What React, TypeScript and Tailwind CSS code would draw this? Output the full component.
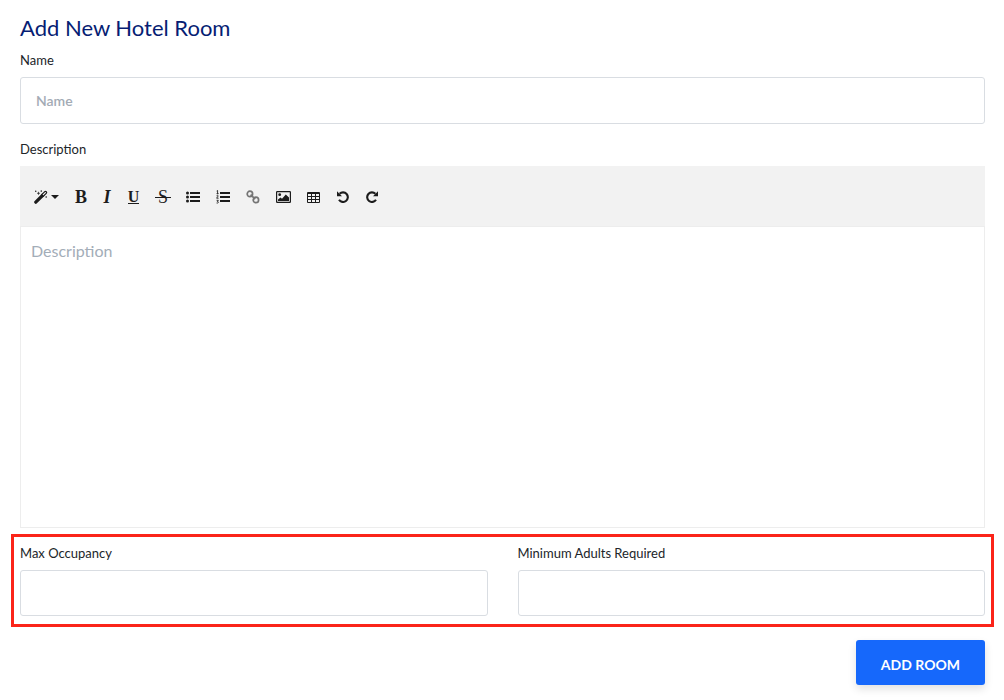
import { useState } from "react";
import type { ReactNode } from "react";

type ToolProps = {
  label: string;
  width: string;
  disabled?: boolean;
  children: ReactNode;
};

function Tool({ label, width, disabled, children }: ToolProps) {
  return (
    <button
      type="button"
      aria-label={label}
      title={label}
      disabled={disabled}
      className={`flex h-6 items-center justify-center text-[#1c1c1c] disabled:text-[#757575] ${width}`}
    >
      {children}
    </button>
  );
}

function WandIcon() {
  return (
    <svg viewBox="0 0 14 14" className="h-[14px] w-[14px] shrink-0" aria-hidden="true">
      <path d="M1.8 12.2 9 5" stroke="currentColor" strokeWidth="3.2" strokeLinecap="round" />
      <path d="m8.6 5.4 2.9-2.9" stroke="currentColor" strokeWidth="3.4" strokeLinecap="round" />
      <path d="m9.3 4.7 2.1-2.1" stroke="#f2f2f2" strokeWidth="1.2" strokeLinecap="round" />
      <path
        d="M4.5 1.8v3M3 3.3h3M7.3.4v1.4M6.6 1.1H8M1.7.6V2M1 1.3h1.4M12.2 6.3v1.4M11.5 7h1.4"
        stroke="currentColor"
        strokeWidth=".7"
      />
    </svg>
  );
}

function CaretIcon() {
  return (
    <svg viewBox="0 0 8 4" className="h-1 w-2 shrink-0" aria-hidden="true">
      <path d="M0 0h8L4 4z" fill="currentColor" />
    </svg>
  );
}

function BulletListIcon() {
  return (
    <svg viewBox="0 0 14 12" className="h-3 w-[14px]" fill="currentColor" aria-hidden="true">
      <path d="M4 1h10v2H4zM4 5h10v2H4zM4 9h10v2H4z" />
      <circle cx="1.5" cy="2" r="1.5" />
      <circle cx="1.5" cy="6" r="1.5" />
      <circle cx="1.5" cy="10" r="1.5" />
    </svg>
  );
}

function NumberListIcon() {
  return (
    <svg viewBox="0 0 14 14" className="h-[14px] w-[14px]" aria-hidden="true">
      <path d="M4 2h10v2H4zM4 6h10v2H4zM4 10h10v2H4z" fill="currentColor" />
      <path
        d="M.7 1 1.6.5v3M.6 3.6h2M.6 5.7c.6-.7 1.7-.4 1.6.3C2.1 6.7.7 7.4.6 8.2h2M.6 10.3h1.7l-.9 1.2c1.5 0 1.4 1.9-.8 1.5"
        fill="none"
        stroke="currentColor"
        strokeWidth=".9"
      />
    </svg>
  );
}

function LinkIcon() {
  return (
    <svg
      viewBox="0 0 14 14"
      className="h-[14px] w-[14px]"
      fill="none"
      stroke="currentColor"
      aria-hidden="true"
    >
      <circle cx="3.9" cy="3.9" r="2.7" strokeWidth="1.7" />
      <circle cx="9.9" cy="9.9" r="2.7" strokeWidth="1.7" />
      <path d="m4.6 4.6 4.6 4.6" strokeWidth="1.8" />
    </svg>
  );
}

function PictureIcon() {
  return (
    <svg viewBox="0 0 15 12" className="h-3 w-[15px]" aria-hidden="true">
      <rect x=".6" y=".6" width="13.8" height="10.8" rx=".6" fill="none" stroke="currentColor" strokeWidth="1.2" />
      <circle cx="3.7" cy="3.7" r="1.4" fill="currentColor" />
      <path d="M2 10V8.5l2.5-2L6 7.7l3.8-4.2L13 6.6V10z" fill="currentColor" />
    </svg>
  );
}

function TableIcon() {
  return (
    <svg viewBox="0 0 13 11" className="h-[11px] w-[13px]" aria-hidden="true">
      <path
        fillRule="evenodd"
        fill="currentColor"
        d="M1 0h11q1 0 1 1v9q0 1-1 1H1q-1 0-1-1V1q0-1 1-1zM1 2v2h3V2zM5 2v2h3V2zM9 2v2h3V2zM1 5v2h3V5zM5 5v2h3V5zM9 5v2h3V5zM1 8v2h3V8zM5 8v2h3V8zM9 8v2h3V8z"
      />
    </svg>
  );
}

function RotateIcon({ flip }: { flip?: boolean }) {
  return (
    <svg
      viewBox="0 0 12 12"
      className={`h-3 w-3 ${flip ? "-scale-x-100" : ""}`}
      aria-hidden="true"
    >
      <path
        d="M2.6 2.8A4.8 4.8 0 1 1 2 8.8"
        fill="none"
        stroke="currentColor"
        strokeWidth="2.1"
      />
      <path d="M0 .3V5.200h5z" fill="currentColor" />
    </svg>
  );
}

function EditorToolbar() {
  return (
    <div
      role="toolbar"
      aria-label="Formatting"
      className="flex h-[60px] items-center gap-4 bg-[#f2f2f2] pt-[2px] pl-[14px]"
    >
      <Tool label="Style" width="w-[25px] gap-[3px]">
        <WandIcon />
        <CaretIcon />
      </Tool>
      <Tool label="Bold" width="w-3">
        <span className="font-['Liberation_Serif',serif] text-[18px] font-bold">B</span>
      </Tool>
      <Tool label="Italic" width="w-2">
        <span className="font-['Liberation_Serif',serif] text-[18px] font-bold italic">I</span>
      </Tool>
      <Tool label="Underline" width="w-[13px]">
        <span className="border-b border-current font-['Liberation_Serif',serif] text-[16px] leading-[13px] font-semibold">
          U
        </span>
      </Tool>
      <Tool label="Strikethrough" width="w-[14px]">
        <span className="px-[3px] font-['Liberation_Serif',serif] text-[18px] bg-[linear-gradient(currentColor,currentColor)] bg-[length:100%_1px] bg-center bg-no-repeat">
          S
        </span>
      </Tool>
      <Tool label="Unordered list" width="w-[14px]">
        <BulletListIcon />
      </Tool>
      <Tool label="Ordered list" width="w-[14px]">
        <NumberListIcon />
      </Tool>
      <Tool label="Link" width="w-[14px]" disabled>
        <LinkIcon />
      </Tool>
      <Tool label="Picture" width="w-[15px]">
        <PictureIcon />
      </Tool>
      <Tool label="Table" width="w-[13px]">
        <TableIcon />
      </Tool>
      <Tool label="Undo" width="w-[13px]">
        <RotateIcon />
      </Tool>
      <Tool label="Redo" width="w-[13px]">
        <RotateIcon flip />
      </Tool>
    </div>
  );
}

type FieldProps = {
  id: string;
  label: string;
  placeholder?: string;
  height: string;
  value: string;
  onChange: (value: string) => void;
};

function Field({ id, label, placeholder, height, value, onChange }: FieldProps) {
  return (
    <div className="flex flex-col gap-[7px]">
      <label htmlFor={id} className="text-[13px] leading-5 text-[#212529]">
        {label}
      </label>
      <input
        id={id}
        type="text"
        placeholder={placeholder}
        value={value}
        onChange={(e) => onChange(e.target.value)}
        className={`w-full rounded-[3px] border border-[#d9dde2] bg-white px-[15px] text-[14px] font-semibold text-[#212529] outline-none placeholder:text-[#a3abb5] focus:border-[#1668fb] ${height}`}
      />
    </div>
  );
}

export default function App() {
  const [form, setForm] = useState({
    name: "",
    description: "",
    maxOccupancy: "",
    minAdults: "",
  });

  return (
    <main className="min-h-screen bg-white pt-[13px] pr-[19px] pb-[15px] pl-5 font-[Lato,sans-serif]">
      <form onSubmit={(e) => e.preventDefault()}>
        <h1 className="mb-2 text-[22px] leading-[29px] text-[#061d73]">Add New Hotel Room</h1>

        <Field
          id="room-name"
          label="Name"
          placeholder="Name"
          height="h-[47px]"
          value={form.name}
          onChange={(name) => setForm((f) => ({ ...f, name }))}
        />

        <div className="mt-[15px] flex flex-col gap-[7px]">
          <label htmlFor="room-description" className="text-[13px] leading-5 text-[#212529]">
            Description
          </label>
          <div>
            <EditorToolbar />
            <textarea
              id="room-description"
              placeholder="Description"
              value={form.description}
              onChange={(e) => setForm((f) => ({ ...f, description: e.target.value }))}
              className="block h-[302px] w-full resize-none border border-[#ededed] px-[10px] py-3 text-[16px] leading-6 text-[#212529] outline-none placeholder:text-[#a3adb8]"
            />
          </div>
        </div>

        <div className="-mx-[9px] mt-[6px] grid grid-cols-2 gap-[30px] border-3 border-[#fb2419] px-[6px] pt-[6px] pb-2">
          <Field
            id="max-occupancy"
            label="Max Occupancy"
            height="h-[46px]"
            value={form.maxOccupancy}
            onChange={(maxOccupancy) => setForm((f) => ({ ...f, maxOccupancy }))}
          />
          <Field
            id="min-adults"
            label="Minimum Adults Required"
            height="h-[46px]"
            value={form.minAdults}
            onChange={(minAdults) => setForm((f) => ({ ...f, minAdults }))}
          />
        </div>

        <div className="mt-[13px] flex justify-end">
          <button
            type="submit"
            className="h-[45px] rounded-[3px] bg-[#1668fb] px-[25px] pt-1 text-[14px] font-bold text-white uppercase shadow-[0_4px_8px_rgba(0,0,0,0.12)] hover:bg-[#0d5aea]"
          >
            Add Room
          </button>
        </div>
      </form>
    </main>
  );
}
